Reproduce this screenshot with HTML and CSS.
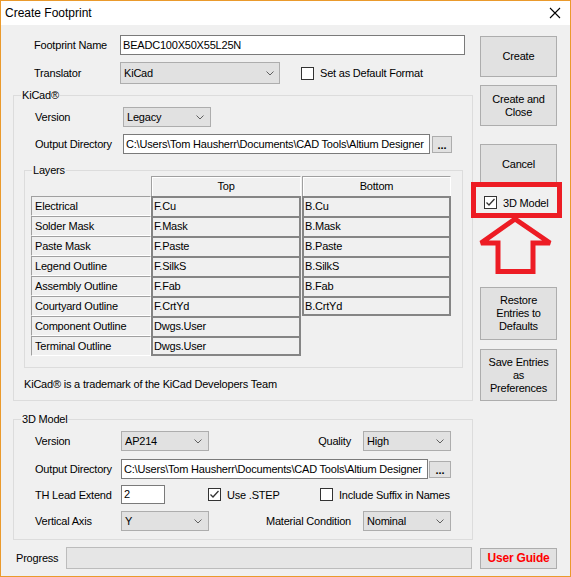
FILE: index.html
```html
<!DOCTYPE html>
<html lang="en">
<head>
  <meta charset="UTF-8">
  <title>Create Footprint</title>
  <link rel="stylesheet" href="styles.css">
</head>
<body>

  <div class="window">
    <div class="titlebar">
      <span class="title">Create Footprint</span>
      <svg class="close" width="12" height="12" viewBox="0 0 12 12"><path d="M1 1L11 11M11 1L1 11" stroke="#000" stroke-width="1.1" fill="none"/></svg>
    </div>

    <div class="client">
      <div class="main">
        <div class="row row-name">
          <span class="lbl w86">Footprint Name</span>
          <div class="textbox name-box">BEADC100X50X55L25N</div>
        </div>
        <div class="row row-trans">
          <span class="lbl w86">Translator</span>
          <div class="combo trans-combo">KiCad
            <svg width="8" height="5" viewBox="0 0 8 5"><path d="M0.5 0.5L4 4L7.5 0.5" fill="none" stroke="#606060"/></svg>
          </div>
          <div class="check default-check"><span class="box"></span>Set as Default Format</div>
        </div>

        <div class="group kicad">
          <div class="group-title">KiCad®</div>
          <div class="row grow first">
            <span class="lbl w88">Version</span>
            <div class="combo sel88">Legacy
              <svg width="8" height="5" viewBox="0 0 8 5"><path d="M0.5 0.5L4 4L7.5 0.5" fill="none" stroke="#606060"/></svg>
            </div>
          </div>
          <div class="row grow dir-row">
            <span class="lbl w88 dir-lbl">Output Directory</span>
            <div class="textbox dir-box">C:\Users\Tom Hausherr\Documents\CAD Tools\Altium Designer</div>
            <div class="dots">...</div>
          </div>

          <div class="group layers">
            <div class="group-title">Layers</div>
            <div class="layers-table">
              <div class="lrow">
                <div class="lcell blank"></div>
                <div class="hcell top">Top</div>
                <div class="hcell bot">Bottom</div>
              </div>
              <div class="lrow">
                <div class="lcell">Electrical</div>
                <div class="dcell top">F.Cu</div>
                <div class="dcell bot">B.Cu</div>
              </div>
              <div class="lrow">
                <div class="lcell">Solder Mask</div>
                <div class="dcell top">F.Mask</div>
                <div class="dcell bot">B.Mask</div>
              </div>
              <div class="lrow">
                <div class="lcell">Paste Mask</div>
                <div class="dcell top">F.Paste</div>
                <div class="dcell bot">B.Paste</div>
              </div>
              <div class="lrow">
                <div class="lcell">Legend Outline</div>
                <div class="dcell top">F.SilkS</div>
                <div class="dcell bot">B.SilkS</div>
              </div>
              <div class="lrow">
                <div class="lcell">Assembly Outline</div>
                <div class="dcell top">F.Fab</div>
                <div class="dcell bot">B.Fab</div>
              </div>
              <div class="lrow">
                <div class="lcell">Courtyard Outline</div>
                <div class="dcell top">F.CrtYd</div>
                <div class="dcell bot last">B.CrtYd</div>
              </div>
              <div class="lrow">
                <div class="lcell">Component Outline</div>
                <div class="dcell top">Dwgs.User</div>
              </div>
              <div class="lrow">
                <div class="lcell">Terminal Outline</div>
                <div class="dcell top last">Dwgs.User</div>
              </div>
            </div>
          </div>

          <p class="tm">KiCad® is a trademark of the KiCad Developers Team</p>
        </div>

        <div class="group model">
          <div class="group-title">3D Model</div>
          <div class="row mrow first">
            <span class="lbl w86">Version</span>
            <div class="combo sel88">AP214
              <svg width="8" height="5" viewBox="0 0 8 5"><path d="M0.5 0.5L4 4L7.5 0.5" fill="none" stroke="#606060"/></svg>
            </div>
            <span class="rlbl">Quality</span>
            <div class="combo sel88">High
              <svg width="8" height="5" viewBox="0 0 8 5"><path d="M0.5 0.5L4 4L7.5 0.5" fill="none" stroke="#606060"/></svg>
            </div>
          </div>
          <div class="row mrow dir3d">
            <span class="lbl w86 dir-lbl">Output Directory</span>
            <div class="textbox dir3d-box">C:\Users\Tom Hausherr\Documents\CAD Tools\Altium Designer</div>
            <div class="dots dots3d">...</div>
          </div>
          <div class="row mrow th-row">
            <span class="lbl w86">TH Lead Extend</span>
            <div class="textbox th-box">2</div>
            <div class="check step-check">
              <span class="box"><svg width="11" height="11" viewBox="0 0 11 11"><path d="M1.5 5.5L4 8L9.5 2" fill="none" stroke="#333" stroke-width="1.3"/></svg></span>Use .STEP
            </div>
            <div class="check"><span class="box"></span>Include Suffix in Names</div>
          </div>
          <div class="row mrow axis-row">
            <span class="lbl w86">Vertical Axis</span>
            <div class="combo sel88">Y
              <svg width="8" height="5" viewBox="0 0 8 5"><path d="M0.5 0.5L4 4L7.5 0.5" fill="none" stroke="#606060"/></svg>
            </div>
            <span class="rlbl">Material Condition</span>
            <div class="combo sel88">Nominal
              <svg width="8" height="5" viewBox="0 0 8 5"><path d="M0.5 0.5L4 4L7.5 0.5" fill="none" stroke="#606060"/></svg>
            </div>
          </div>
        </div>
      </div>

      <div class="side">
        <div class="btn btn-create">Create</div>
        <div class="btn btn-close">Create and<br>Close</div>
        <div class="btn btn-cancel">Cancel</div>
        <div class="check model-check">
          <span class="box"><svg width="11" height="11" viewBox="0 0 11 11"><path d="M1.5 5.5L4 8L9.5 2" fill="none" stroke="#333" stroke-width="1.3"/></svg></span>3D Model
        </div>
        <div class="btn btn-restore">Restore<br>Entries to<br>Defaults</div>
        <div class="btn btn-save">Save Entries<br>as<br>Preferences</div>
      </div>
    </div>

    <div class="footer">
      <span class="progress-lbl">Progress</span>
      <div class="progress"></div>
      <div class="btn guide">User Guide</div>
    </div>

    <!-- red callout drawn over the dialog -->
    <svg class="callout" width="571" height="577" viewBox="0 0 571 577">
      <rect x="473.5" y="184.5" width="86" height="31" fill="none" stroke="#ed1c24" stroke-width="5"/>
      <polygon points="515,219 481,243 498,243 498,271.5 533,271.5 533,243 550,243" fill="none" stroke="#ed1c24" stroke-width="5" stroke-miterlimit="2"/>
    </svg>
  </div>

</body>
</html>
```

FILE: styles.css
```css
body {
  margin: 0;
  font-family: 'Liberation Sans', Arial, sans-serif;
  font-size: 11px;
  letter-spacing: -0.2px;
  color: #000;
  background: #f0f0f0;
}

.window {
  position: relative;
  width: 571px;
  height: 577px;
  box-sizing: border-box;
  border: 1px solid #ea9a2c;
  background: #f0f0f0;
}

.titlebar {
  height: 24px;
  background: #fff;
  display: flex;
  align-items: center;
  padding-left: 4px;
  font-size: 12px;
  letter-spacing: 0;
}
.close {
  margin-left: auto;
  margin-right: 9px;
}

.client {
  display: flex;
  padding: 0 13px 0 12px;
}
.main {
  width: 460px;
  padding-top: 10px;
}
.side {
  width: 77px;
  margin-left: 7px;
  display: flex;
  flex-direction: column;
}

.row {
  display: flex;
  align-items: center;
}
.lbl { flex-shrink: 0; }
.w86 { width: 86px; }
.w88 { width: 88px; }
.dir-lbl { margin-left: -1px; padding-left: 1px; }

.row-name {
  height: 20px;
  padding-left: 21px;
}
.row-trans {
  height: 22px;
  margin-top: 7px;
  padding-left: 21px;
}

.textbox {
  height: 20px;
  box-sizing: border-box;
  border: 1px solid #7a7a7a;
  background: #fff;
  padding-left: 2px;
  line-height: 18px;
  white-space: nowrap;
  overflow: hidden;
}
.name-box { width: 345px; }
.dir-box { width: 307px; }
.dir3d-box { width: 307px; }
.th-box { width: 44px; height: 19px; line-height: 17px; }

.combo {
  height: 20px;
  box-sizing: border-box;
  border: 1px solid #adadad;
  background: #e1e1e1;
  display: flex;
  align-items: center;
  padding-left: 3px;
  flex-shrink: 0;
}
.combo svg {
  margin-left: auto;
  margin-right: 6px;
}
.trans-combo {
  width: 160px;
  height: 22px;
}
.trans-combo svg { margin-right: 5px; }
.sel88 { width: 88px; }

.dots {
  width: 20px;
  height: 17px;
  box-sizing: border-box;
  border: 1px solid #adadad;
  background: #e1e1e1;
  margin-left: 2px;
  text-align: center;
  font-weight: bold;
  line-height: 16px;
  letter-spacing: 0;
}
.dots3d { width: 22px; margin-left: 1px; }

.check {
  display: flex;
  align-items: center;
  white-space: nowrap;
}
.box {
  width: 13px;
  height: 13px;
  box-sizing: border-box;
  border: 1px solid #333;
  background: #fff;
  margin-right: 6px;
  display: flex;
  flex-shrink: 0;
}
.default-check { margin-left: 21px; }

.group {
  border: 1px solid #dcdcdc;
}
.group-title {
  line-height: 13px;
  margin: -7px 0 0 7px;
  padding: 0 1px;
  background: #f0f0f0;
  width: fit-content;
}

.kicad {
  margin-top: 11px;
  padding-bottom: 9px;
}
.grow { padding-left: 21px; height: 20px; }
.grow.first { margin-top: 5px; }
.dir-row { margin-top: 7px; }

.layers {
  margin: 16px 0 0 10px;
  width: 439px;
  box-sizing: border-box;
  padding-bottom: 11px;
}
.layers-table {
  margin: -1px 0 0 6px;
}
.lrow {
  display: flex;
  height: 20px;
}
.lcell {
  width: 120px;
  box-sizing: border-box;
  border-top: 1px solid #a0a0a0;
  border-left: 1px solid #a0a0a0;
  border-bottom: 1px solid #fff;
  border-right: 1px solid #fff;
  padding-left: 3px;
  line-height: 18px;
  white-space: nowrap;
}
.lcell.blank { border-color: transparent; }
.hcell {
  box-sizing: border-box;
  border-top: 1px solid #a0a0a0;
  border-left: 1px solid #a0a0a0;
  border-right: 1px solid #fff;
  box-shadow: inset 1px 1px 0 #fff;
  text-align: center;
  line-height: 19px;
}
.dcell {
  box-sizing: border-box;
  border: 2px solid #858585;
  border-bottom: 0;
  padding-left: 1px;
  line-height: 17px;
}
.dcell.last { border-bottom: 2px solid #858585; }
.top { width: 150px; margin-right: 1px; }
.bot { width: 149px; }

.tm {
  margin: 10px 0 0 10px;
  line-height: 13px;
}

.model {
  margin-top: 18px;
  padding-bottom: 8px;
}
.mrow {
  padding: 0 21px;
  height: 20px;
}
.mrow.first { margin-top: 5px; }
.dir3d { margin-top: 8px; }
.th-row { margin-top: 6px; height: 19px; }
.axis-row { margin-top: 7px; }
.rlbl {
  margin-left: auto;
  margin-right: 12px;
}
.step-check {
  margin-left: 43px;
  width: 112px;
}

.btn {
  box-sizing: border-box;
  border: 1px solid #adadad;
  background: #e1e1e1;
  display: flex;
  align-items: center;
  justify-content: center;
  text-align: center;
  line-height: 13px;
}
.btn-create { margin-top: 11px; height: 41px; }
.btn-close { margin-top: 8px; height: 41px; }
.btn-cancel { margin-top: 18px; height: 41px; }
.model-check {
  margin: 11px 0 0 4px;
  height: 13px;
}
.btn-restore { margin-top: 78px; height: 53px; }
.btn-save { margin-top: 9px; height: 52px; }

.footer {
  display: flex;
  align-items: flex-start;
  margin-top: 7px;
  padding-left: 15px;
}
.progress-lbl {
  width: 50px;
  line-height: 22px;
}
.progress {
  width: 406px;
  height: 22px;
  box-sizing: border-box;
  border: 1px solid #bcbcbc;
  background: #e6e6e6;
}
.guide {
  width: 77px;
  height: 21px;
  margin: 1px 0 0 8px;
  color: #ff0000;
  font-weight: bold;
  font-size: 12px;
}

.callout {
  position: absolute;
  left: -1px;
  top: -1px;
  pointer-events: none;
}
```
